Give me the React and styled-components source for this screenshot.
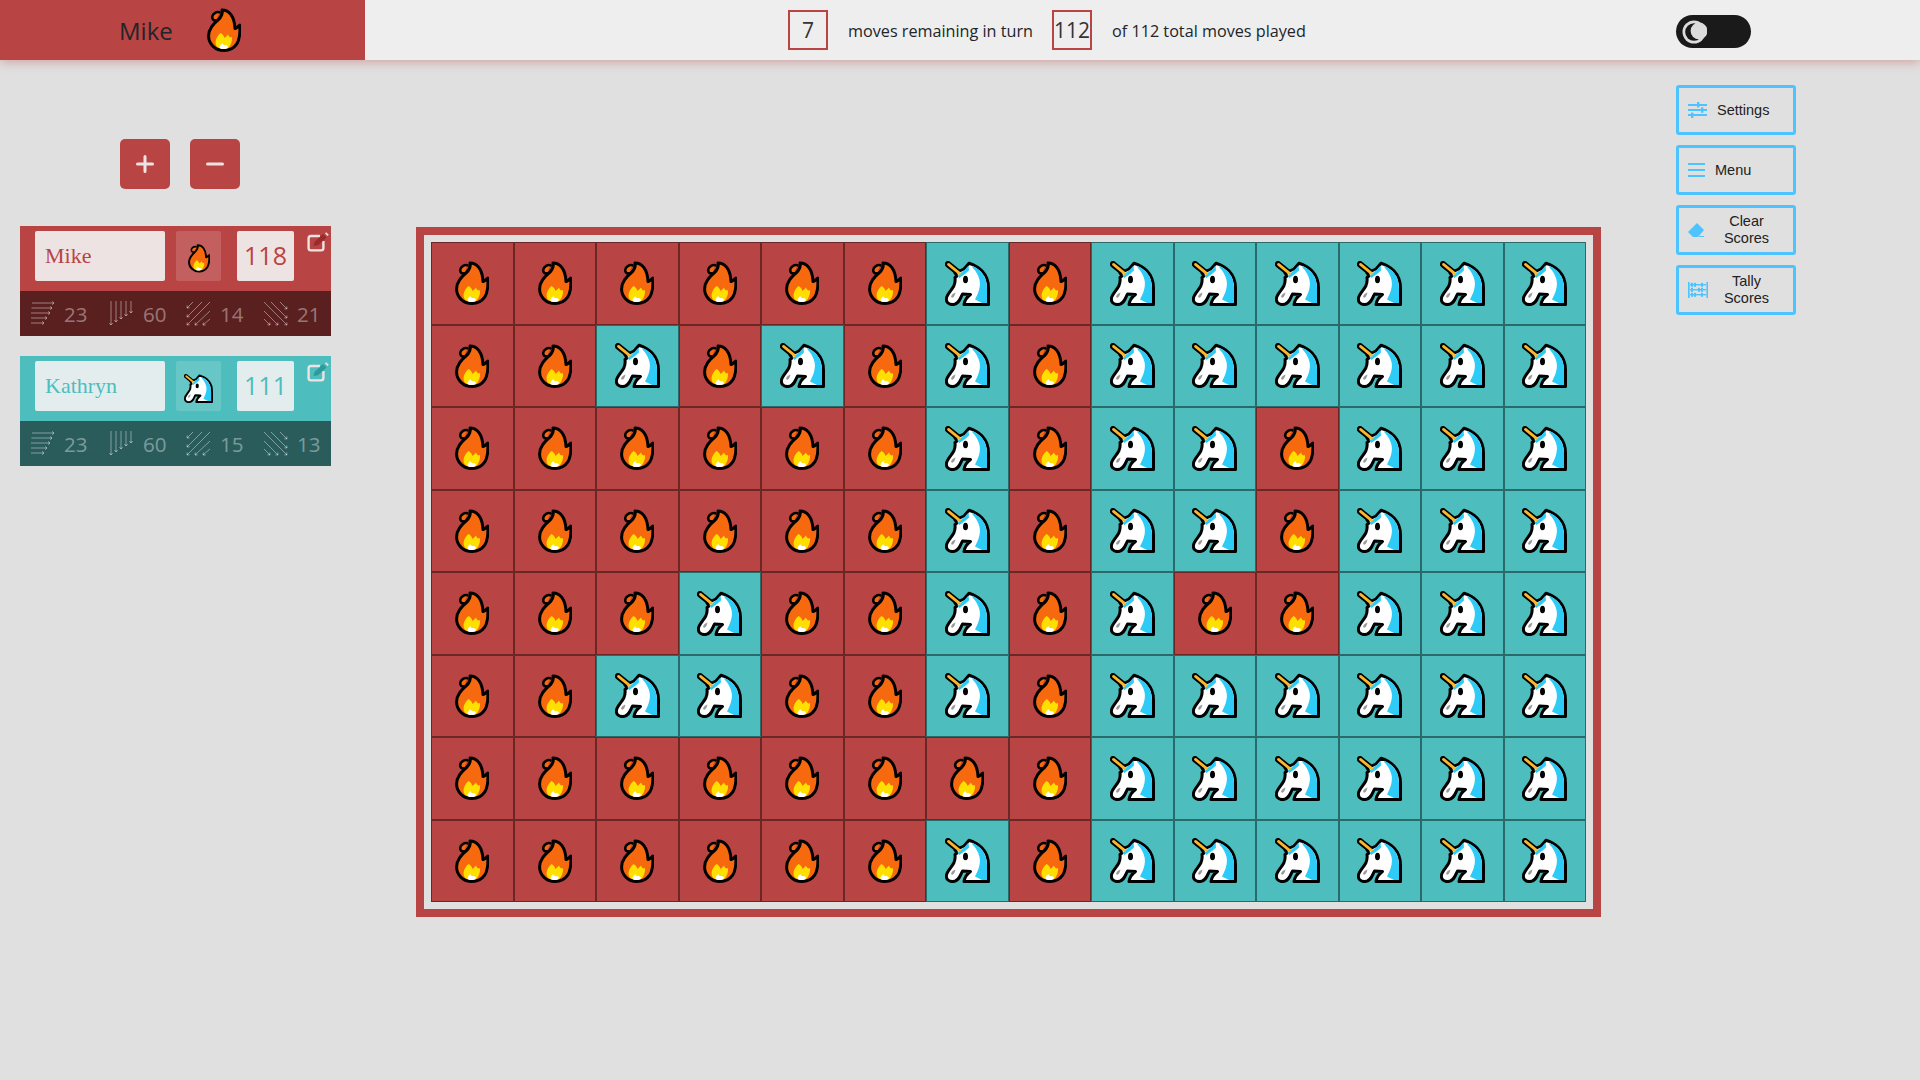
import styled, { createGlobalStyle } from "styled-components";

const RED = "#b94444";
const TEAL = "#4dbdbd";
const BLUE = "#4dc3ff";

const board = [
  "FFFFFFUFUUUUUU",
  "FFUFUFUFUUUUUU",
  "FFFFFFUFUUFUUU",
  "FFFFFFUFUUFUUU",
  "FFFUFFUFUFFUUU",
  "FFUUFFUFUUUUUU",
  "FFFFFFFFUUUUUU",
  "FFFFFFUFUUUUUU",
];

const players = [
  { name: "Mike", team: "F", score: 118, color: RED, dark: "#5a2020", pen: "#9c2a2a", stats: [23, 60, 14, 21] },
  { name: "Kathryn", team: "U", score: 111, color: TEAL, dark: "#2a5c5c", pen: "#2f9a9a", stats: [23, 60, 15, 13] },
];

function Flame({ size = 34 }) {
  return (
    <svg width={size} height={size * 1.3} viewBox="0 0 34 44">
      <path
        d="M15 1.8C22 1.8 27.5 8 28 20.5C29.6 19.8 31.2 18.6 32.8 17C33.2 24 33.2 30.5 29.8 35.8C26.8 40.2 22 42.4 17 42.4C8.4 42.4 1.6 36 1.6 28C1.6 20.5 6.8 15.8 11.5 11.5C14 9 15.8 5 15 1.8Z"
        fill="#f7690f"
        stroke="#000"
        strokeWidth="3"
        strokeLinejoin="round"
      />
      <path
        d="M12.5 4.2C9.5 3.2 5.4 5.6 5.2 8.8C5 11.4 6.8 12.6 9 12.2"
        fill="#f7690f"
        stroke="#000"
        strokeWidth="2.6"
        strokeLinecap="round"
      />
      <path
        d="M13.5 25C15.8 26 17 28 17.4 30C18.4 29 20 28 21 26.5C21.8 29 23.6 30 25 29C25.4 33 24 37 21.5 39.6C19 41 14 41 10.5 39.2C7.6 36.5 7.4 30.5 13.5 25Z"
        fill="#ffdf00"
      />
      <path d="M12.5 40C12.5 37.4 14 36.4 15.4 35C15.8 36.4 16.4 37 17.5 37C19 37 20 37 21 38.6C20.6 40 19 41 16 41C14.8 41 13.6 40.8 12.5 40Z" fill="#fff" />
    </svg>
  );
}

function Unicorn({ size = 45 }) {
  return (
    <svg width={size} height={size} viewBox="0 0 45 45">
      <path d="M3 3.2L14.5 12.5" stroke="#000" strokeWidth="6.4" strokeLinecap="round" />
      <path
        d="M24 2.2C33 5 43.5 12 43.5 27V43.5H19C19.5 40 22 36 25.5 33.5L17.5 33C15.5 36 14.5 43.6 7.5 43.6C3 43.6 0.8 40.5 1.5 37C2.2 33 6.5 29.5 8.8 25C10 22.5 10.4 19.5 10 16.5L12 15L10 12L19 8Z"
        fill="#fff"
        stroke="#000"
        strokeWidth="3"
        strokeLinejoin="round"
      />
      <path d="M12.5 14.5L14 16.5L13.5 17.5L20 13L24 9.5L23.5 4.5L19.5 9Z" fill="#2dcbf5" />
      <path d="M27.5 4.8C35 8 42 15 42 27V42H37L30 38.5C33 33 36 26 34.5 19C33.6 15 31 10 27.5 6.5Z" fill="#2dcbf5" />
      <path d="M3.5 3.4L14.5 12.4" stroke="#fcb62c" strokeWidth="2.8" strokeLinecap="round" />
      <ellipse cx="20.5" cy="18.5" rx="2.5" ry="3.8" fill="#000" />
      <path d="M6 36C6.5 33.8 8.5 32.2 10.4 31.6C10.2 34 8.6 36.8 7.2 36.8Z" fill="#9a9a9a" />
    </svg>
  );
}

function Arrow({ x1, y1, x2, y2 }) {
  const a = Math.atan2(y2 - y1, x2 - x1);
  const h = 2.6;
  const p1 = [x2 - h * Math.cos(a - 0.7), y2 - h * Math.sin(a - 0.7)];
  const p2 = [x2 - h * Math.cos(a + 0.7), y2 - h * Math.sin(a + 0.7)];
  return <path d={`M${x1} ${y1}L${x2} ${y2}M${p1[0]} ${p1[1]}L${x2} ${y2}L${p2[0]} ${p2[1]}`} />;
}

const statArrows = [
  [
    [2, 2, 24, 2],
    [1.5, 7, 22, 7],
    [1, 12, 20, 12],
    [1, 17, 17, 17],
    [1, 22, 14, 22],
  ],
  [
    [2, 0, 2, 24],
    [7, 0, 7, 21],
    [12, 0, 12, 18],
    [17, 0, 17, 15],
    [22, 0, 22, 12],
  ],
  [
    [7, 1, 1, 7],
    [16, 1, 1, 16],
    [24, 1, 1, 24],
    [24, 10, 9, 24],
    [24, 18, 17, 24],
  ],
  [
    [17, 1, 24, 8],
    [8, 1, 24, 17],
    [1, 1, 24, 24],
    [1, 10, 15, 24],
    [1, 18, 7, 24],
  ],
];

function StatIcon({ kind }) {
  return (
    <StatSvg viewBox="0 0 25 25">
      {statArrows[kind].map(([x1, y1, x2, y2]) => (
        <Arrow key={`${x1}-${y1}`} x1={x1} y1={y1} x2={x2} y2={y2} />
      ))}
    </StatSvg>
  );
}

function EditIcon({ pen }) {
  return (
    <svg width="22" height="20" viewBox="0 0 22 20">
      <path d="M13 4H4Q1.6 4 1.6 6.4V16Q1.6 18.4 4 18.4H14Q16.4 18.4 16.4 16V9" fill="none" stroke="#eee3e3" strokeWidth="2.4" />
      <path d="M6.5 14L7.5 10L16 2L19.5 5.5L11 13.2Z" fill={pen} />
      <path d="M18 1.4L19.2 0.2L21.8 2.8L20.6 4Z" fill="#eee3e3" />
    </svg>
  );
}

function SettingsIcon() {
  return (
    <svg width="20" height="16" viewBox="0 0 20 16" fill={BLUE}>
      <rect y="2" width="19" height="2" />
      <rect x="9" y="0" width="2.4" height="5.4" />
      <rect y="7" width="19" height="2" />
      <rect x="13" y="5.4" width="2.4" height="5.4" />
      <rect y="12" width="19" height="2" />
      <rect x="3" y="10.6" width="2.4" height="5.4" />
    </svg>
  );
}

function MenuIcon() {
  return (
    <svg width="17" height="14" viewBox="0 0 17 14" fill={BLUE}>
      <rect width="17" height="2" />
      <rect y="6" width="17" height="2" />
      <rect y="12" width="17" height="2" />
    </svg>
  );
}

function EraserIcon() {
  return (
    <svg width="17" height="15" viewBox="0 0 17 15" fill={BLUE}>
      <path d="M0 9L9 0L16 7L10 14H5Z" />
      <rect x="11" y="13" width="5" height="1" />
    </svg>
  );
}

function TallyIcon() {
  return (
    <svg width="20" height="16" viewBox="0 0 20 16" fill={BLUE}>
      <rect width="1.6" height="16" />
      <rect x="18.4" width="1.6" height="16" />
      <rect x="2" y="2" width="16" height="1.4" />
      <rect x="2" y="7" width="16" height="1.4" />
      <rect x="2" y="12" width="16" height="1.4" />
      <rect x="3" y="0.8" width="2" height="4" />
      <rect x="6" y="0.8" width="2" height="4" />
      <rect x="13" y="0.8" width="2" height="4" />
      <rect x="3" y="5.8" width="2" height="4" />
      <rect x="10" y="5.8" width="2" height="4" />
      <rect x="13" y="5.8" width="2" height="4" />
      <rect x="3" y="10.8" width="2" height="4" />
      <rect x="6" y="10.8" width="2" height="4" />
      <rect x="13" y="10.8" width="2" height="4" />
    </svg>
  );
}

const actions = [
  { label: "Settings", icon: <SettingsIcon />, tight: false, gap: 9 },
  { label: "Menu", icon: <MenuIcon />, tight: false, gap: 7 },
  { label: "Clear Scores", icon: <EraserIcon />, tight: true, gap: 4 },
  { label: "Tally Scores", icon: <TallyIcon />, tight: true, gap: 4 },
];

export default function App() {
  return (
    <>
      <GlobalStyle />
      <Header>
        <TurnPane>
          <TurnName>Mike</TurnName>
          <Flame size={34} />
        </TurnPane>
        <MovesBar>
          <MoveBox>7</MoveBox>
          <MoveText>moves remaining in turn</MoveText>
          <MoveBox>112</MoveBox>
          <MoveText>of 112 total moves played</MoveText>
        </MovesBar>
        <ThemeToggle>
          <svg width="26" height="26" viewBox="0 0 26 26">
            <circle cx="13" cy="13" r="11.5" fill="#ddd" />
            <circle cx="13" cy="13" r="8.8" fill="#1a1a1a" />
            <circle cx="18" cy="12" r="8.4" fill="#ddd" />
          </svg>
        </ThemeToggle>
      </Header>
      <Main>
        <LeftColumn>
          <CountButtons>
            <CountButton>
              <svg width="18" height="18" viewBox="0 0 18 18">
                <path d="M9 1.5V16.5M1.5 9H16.5" stroke="#eee3e3" strokeWidth="3" strokeLinecap="round" />
              </svg>
            </CountButton>
            <CountButton>
              <svg width="18" height="18" viewBox="0 0 18 18">
                <path d="M1.5 9H16.5" stroke="#eee3e3" strokeWidth="3" strokeLinecap="round" />
              </svg>
            </CountButton>
          </CountButtons>
          <Players>
            {players.map((p) => (
              <Player key={p.name}>
                <PlayerTop $color={p.color}>
                  <NameInput $color={p.color} defaultValue={p.name} />
                  <TeamBox>{p.team === "F" ? <Flame size={22} /> : <Unicorn size={29} />}</TeamBox>
                  <ScoreBox $color={p.color}>{p.score}</ScoreBox>
                  <EditSlot>
                    <EditIcon pen={p.pen} />
                  </EditSlot>
                </PlayerTop>
                <StatRow $dark={p.dark}>
                  {p.stats.map((value, i) => (
                    <Stat key={i}>
                      <StatIcon kind={i} />
                      <span>{value}</span>
                    </Stat>
                  ))}
                </StatRow>
              </Player>
            ))}
          </Players>
        </LeftColumn>
        <Board>
          {board.map((row, r) =>
            row.split("").map((c, i) => (
              <Cell key={`${r}-${i}`} $team={c}>
                {c === "F" ? <Flame size={34} /> : <Unicorn size={45} />}
              </Cell>
            ))
          )}
        </Board>
        <RightColumn>
          {actions.map((a) => (
            <ActionButton key={a.label}>
              <ActionIcon>{a.icon}</ActionIcon>
              <ActionLabel $tight={a.tight} $gap={a.gap}>
                {a.label}
              </ActionLabel>
            </ActionButton>
          ))}
        </RightColumn>
      </Main>
    </>
  );
}

const GlobalStyle = createGlobalStyle`
  html, body {
    margin: 0;
    height: 100%;
    background: #e0e0e0;
    font-family: "Open Sans", "Noto Sans", sans-serif;
    overflow: hidden;
  }
`;

const Header = styled.header`
  position: relative;
  height: 60px;
  display: flex;
  align-items: center;
  background: #eeeeee;
  box-shadow: 0 2px 10px rgba(185, 68, 68, 0.4);
`;

const TurnPane = styled.div`
  width: 365px;
  height: 60px;
  flex: none;
  background: ${RED};
  display: flex;
  align-items: center;
  padding-left: 119px;
  box-sizing: border-box;
  gap: 34px;
`;

const TurnName = styled.span`
  font-size: 24px;
  color: #212529;
  width: 54px;
`;

const MovesBar = styled.div`
  display: flex;
  align-items: center;
  margin-left: 423px;
  width: 888px;
  flex: none;
`;

const MoveBox = styled.div`
  width: 40px;
  height: 40px;
  box-sizing: border-box;
  border: 2px solid ${RED};
  display: flex;
  align-items: center;
  justify-content: center;
  font-size: 21px;
  color: #333;
`;

const MoveText = styled.span`
  font-size: 16.2px;
  color: #212529;
  margin: 2px 19px 0 20px;
`;

const ThemeToggle = styled.div`
  position: absolute;
  left: 1676px;
  top: 15px;
  width: 75px;
  height: 33px;
  border-radius: 17px;
  background: #1a1a1a;
  display: flex;
  align-items: center;
  padding-left: 5px;
  box-sizing: border-box;
`;

const Main = styled.main`
  display: flex;
  align-items: flex-start;
`;

const LeftColumn = styled.aside`
  width: 416px;
  flex: none;
  padding-top: 79px;
`;

const CountButtons = styled.div`
  display: flex;
  gap: 20px;
  padding-left: 120px;
`;

const CountButton = styled.button`
  width: 50px;
  height: 50px;
  border: 0;
  padding: 0;
  border-radius: 5px;
  background: ${RED};
  display: flex;
  align-items: center;
  justify-content: center;
`;

const Players = styled.div`
  margin: 37px 0 0 20px;
  width: 311px;
  display: flex;
  flex-direction: column;
  gap: 20px;
`;

const Player = styled.section`
  display: flex;
  flex-direction: column;
`;

const PlayerTop = styled.div`
  height: 65px;
  background: ${(p) => p.$color};
  display: flex;
  align-items: flex-start;
  padding: 5px 0 0 15px;
  box-sizing: border-box;
`;

const NameInput = styled.input`
  width: 130px;
  height: 50px;
  box-sizing: border-box;
  border: 0;
  border-radius: 2px;
  padding: 0 10px;
  background: rgba(241, 241, 241, 0.92);
  color: ${(p) => p.$color};
  font-family: "Liberation Serif", serif;
  font-size: 22px;
`;

const TeamBox = styled.div`
  width: 45px;
  height: 50px;
  margin-left: 11px;
  padding-top: 5px;
  box-sizing: border-box;
  border-radius: 2px;
  background: rgba(255, 255, 255, 0.15);
  display: flex;
  align-items: center;
  justify-content: center;
`;

const ScoreBox = styled.div`
  width: 57px;
  height: 50px;
  margin-left: 16px;
  padding-bottom: 2px;
  box-sizing: border-box;
  border-radius: 2px;
  background: rgba(241, 241, 241, 0.92);
  color: ${(p) => p.$color};
  display: flex;
  align-items: center;
  justify-content: center;
  font-size: 25px;
`;

const EditSlot = styled.div`
  margin: 1px 0 0 13px;
`;

const StatRow = styled.div`
  height: 45px;
  background: ${(p) => p.$dark};
  display: grid;
  grid-template-columns: 79px 77px 77px 1fr;
  padding-left: 10px;
  align-items: center;
`;

const Stat = styled.div`
  display: flex;
  align-items: center;
  gap: 9px;
  font-size: 20.5px;
  color: rgba(255, 255, 255, 0.4);
`;

const StatSvg = styled.svg`
  width: 25px;
  height: 25px;
  flex: none;
  fill: none;
  stroke: rgba(255, 255, 255, 0.42);
  stroke-width: 1;
`;

const Board = styled.div`
  margin-top: 167px;
  width: 1185px;
  height: 690px;
  box-sizing: border-box;
  flex: none;
  border: 8px solid ${RED};
  padding: 7px;
  display: grid;
  grid-template-columns: repeat(14, 82.5px);
  grid-template-rows: repeat(8, 82.5px);
`;

const Cell = styled.div`
  box-sizing: border-box;
  background: ${(p) => (p.$team === "F" ? RED : TEAL)};
  border: 1px solid ${(p) => (p.$team === "F" ? "#6b2626" : "#2a6a6a")};
  display: flex;
  align-items: center;
  justify-content: center;
`;

const RightColumn = styled.nav`
  margin: 25px 0 0 75px;
  width: 120px;
  flex: none;
  display: flex;
  flex-direction: column;
  gap: 10px;
`;

const ActionButton = styled.button`
  width: 120px;
  height: 50px;
  box-sizing: border-box;
  border: 3px solid ${BLUE};
  border-radius: 3px;
  background: transparent;
  padding: 0 0 0 9px;
  display: flex;
  align-items: center;
  font-family: "Liberation Sans", Arial, sans-serif;
  font-size: 14.5px;
  line-height: 17px;
  color: #222;
`;

const ActionIcon = styled.span`
  display: flex;
  flex: none;
  width: 20px;
`;

const ActionLabel = styled.span`
  flex: ${(p) => (p.$tight ? 1 : "none")};
  margin-left: ${(p) => p.$gap}px;
  padding: ${(p) => (p.$tight ? "0 14px 0 2px" : "0")};
  text-align: center;
`;
